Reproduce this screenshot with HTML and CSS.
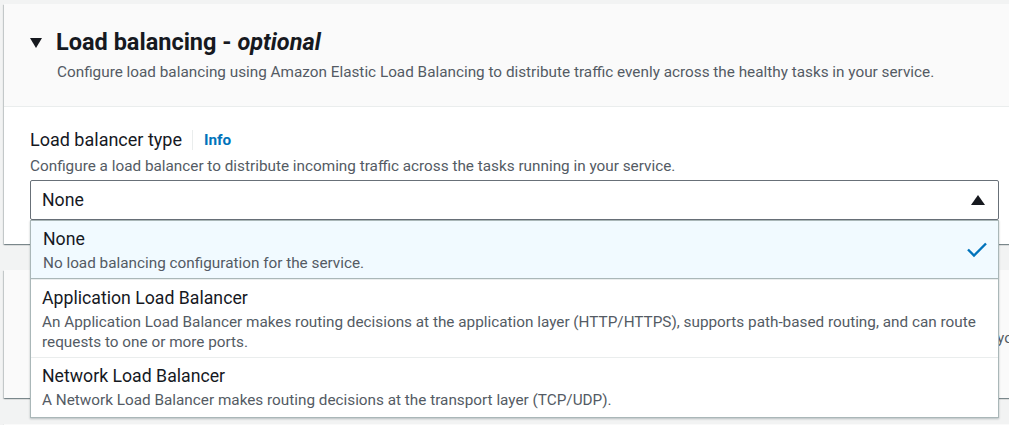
FILE: index.html
```html
<!DOCTYPE html>
<html lang="en">
<head>
<meta charset="utf-8">
<title>Load balancing</title>
<link rel="stylesheet" href="styles.css">
</head>
<body>
<div class="page">
  <section class="card">
    <header class="card-header">
      <div class="title-row">
        <span class="caret caret-down"></span>
        <h2 class="title">Load balancing - <em>optional</em></h2>
      </div>
      <p class="header-desc">Configure load balancing using Amazon Elastic Load Balancing to distribute traffic evenly across the healthy tasks in your service.</p>
    </header>
    <div class="card-body">
      <div class="label-row">
        <span class="label">Load balancer type</span>
        <span class="divider"></span>
        <a class="info">Info</a>
      </div>
      <p class="field-desc">Configure a load balancer to distribute incoming traffic across the tasks running in your service.</p>
      <div class="select-wrap">
        <div class="select">
          <span class="select-value">None</span>
          <span class="caret caret-up"></span>
        </div>
        <ul class="dropdown">
          <li class="option selected">
            <div class="option-text">
              <div class="option-title">None</div>
              <div class="option-desc">No load balancing configuration for the service.</div>
            </div>
            <svg class="check" width="22" height="16" viewBox="0 0 22 16"><path d="M2 7.5 L8 13.5 L20 1.5" fill="none" stroke="#0073bb" stroke-width="2.4" stroke-linejoin="miter"/></svg>
          </li>
          <li class="option">
            <div class="option-text">
              <div class="option-title">Application Load Balancer</div>
              <div class="option-desc">An Application Load Balancer makes routing decisions at the application layer (HTTP/HTTPS), supports path-based routing, and can route requests to one or more ports.</div>
            </div>
          </li>
          <li class="option last">
            <div class="option-text">
              <div class="option-title">Network Load Balancer</div>
              <div class="option-desc">A Network Load Balancer makes routing decisions at the transport layer (TCP/UDP).</div>
            </div>
          </li>
        </ul>
      </div>
    </div>
  </section>
  <section class="card card-collapsed">
    <header class="card-header">
      <p class="header-desc nowrap">Automatically adjust your service's desired count up and down within a specified range in response to CloudWatch alarms. You can modify your</p>
    </header>
  </section>
  <section class="card">
    <header class="card-header"></header>
  </section>
</div>
</body>
</html>
```
FILE: styles.css
```css
* { box-sizing: border-box; }
html, body { margin: 0; padding: 0; }
body {
  background: #f2f3f3;
  font-family: Roboto, "Noto Sans", Arial, sans-serif;
  color: #16191f;
  width: 1009px;
  height: 425px;
  overflow: hidden;
}
.page {
  padding: 4px 0 0 4px;
  display: flex;
  flex-direction: column;
  gap: 26px;
}
.card {
  width: 1060px;
  background: #ffffff;
  box-shadow: 0 1px 1px 0 rgba(0, 28, 36, 0.3), 1px 1px 1px 0 rgba(0, 28, 36, 0.15), -1px 1px 1px 0 rgba(0, 28, 36, 0.15);
  flex-shrink: 0;
}
.card-header {
  background: #fafafa;
  border-bottom: 1px solid #eaeded;
  padding: 23px 26px 24px;
}
.card-collapsed .card-header {
  border-bottom: none;
  padding-top: 53px;
  padding-bottom: 50px;
}
.title-row {
  display: flex;
  align-items: center;
  height: 30px;
}
.caret {
  width: 0;
  height: 0;
  display: inline-block;
}
.caret-down {
  border-left: 6.5px solid transparent;
  border-right: 6.5px solid transparent;
  border-top: 10px solid #16191f;
  margin-right: 14px;
  margin-top: 2px;
}
.title {
  margin: 0;
  font-size: 23.5px;
  font-weight: 700;
  line-height: 30px;
  color: #16191f;
}
.title em { font-style: italic; }
.header-desc {
  margin: 5px 0 0 27px;
  font-size: 15.3px;
  line-height: 20px;
  color: #545b64;
}
.nowrap { white-space: nowrap; }
.card-body {
  padding: 21px 26px 24px;
}
.label-row {
  display: flex;
  align-items: center;
  height: 24px;
}
.label {
  font-size: 18px;
  line-height: 24px;
  color: #16191f;
}
.divider {
  width: 1px;
  height: 20px;
  background: #eaeded;
  margin: 0 11px 0 10px;
}
.info {
  font-size: 15.3px;
  font-weight: 700;
  color: #0073bb;
}
.field-desc {
  margin: 4px 0 4px;
  font-size: 15.3px;
  line-height: 20px;
  color: #545b64;
}
.select-wrap {
  position: relative;
  width: 969px;
}
.select {
  height: 40px;
  border: 1px solid #687078;
  border-radius: 2px;
  background: #fff;
  display: flex;
  align-items: center;
  justify-content: space-between;
  padding: 0 13px 1px 11px;
}
.select-value {
  font-size: 17.7px;
  color: #16191f;
}
.caret-up {
  border-left: 7px solid transparent;
  border-right: 7px solid transparent;
  border-bottom: 10px solid #16191f;
}
.dropdown {
  position: absolute;
  top: 100%;
  left: 0;
  width: 100%;
  margin: 0;
  padding: 0;
  list-style: none;
  background: #fff;
  border: 1px solid #aab7b8;
  border-top: none;
  box-shadow: 0 1px 2px rgba(0, 28, 36, 0.25);
  z-index: 10;
}
.option {
  display: flex;
  align-items: center;
  padding: 6px 11px 5px;
  border-top: 1px solid #eaeded;
}
.option:first-child { border-top: none; }
.option.last { padding-bottom: 7px; }
.option.selected {
  background: #f1faff;
  border: 1px solid #aab7b8;
  margin: 0 -1px;
  padding-left: 12px;
  padding-right: 10px;
}
.option-text { flex: 1; }
.option-title {
  font-size: 17.7px;
  line-height: 24px;
  color: #16191f;
}
.option-desc {
  margin-top: 2px;
  font-size: 15.3px;
  line-height: 20px;
  color: #545b64;
}
.check { flex-shrink: 0; }
```
